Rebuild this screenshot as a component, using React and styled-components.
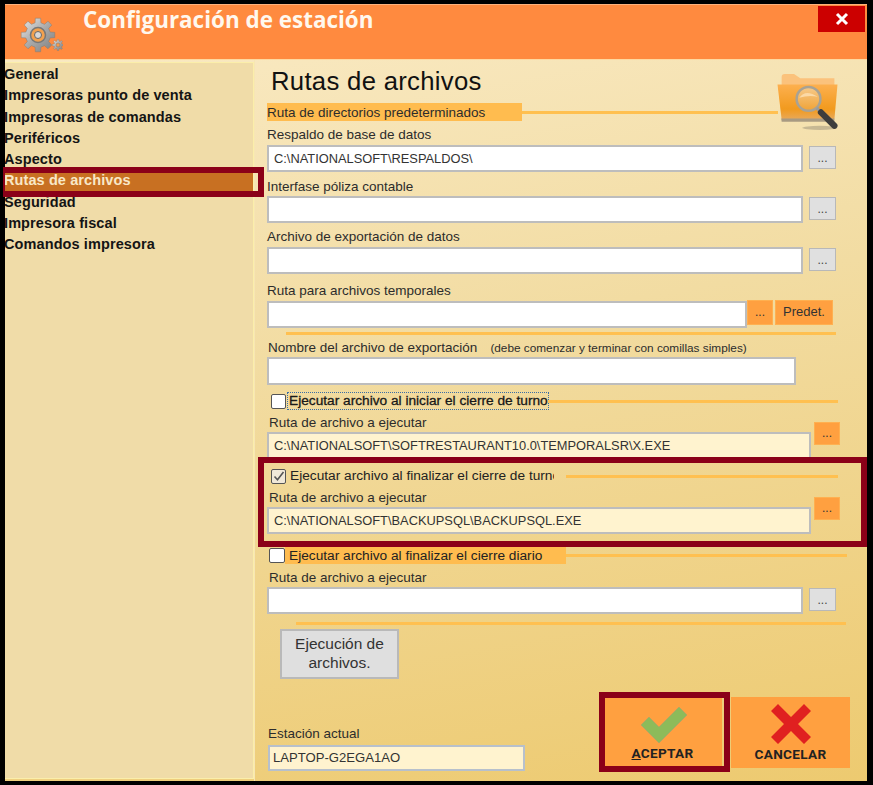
import React from 'react';
import styled, { createGlobalStyle } from 'styled-components';

const Global = createGlobalStyle`
  html, body { margin: 0; padding: 0; background: #000; }
  body { width: 873px; height: 785px; overflow: hidden; font-family: "Liberation Sans", Arial, sans-serif; }
`;

const Frame = styled.div`
  position: relative; box-sizing: border-box; width: 873px; height: 785px;
  padding: 4px 6px 4px 5px; display: flex; flex-direction: column; background: #000;
`;
const TitleBar = styled.header`
  height: 55px; flex: none; display: flex; background: #ff8a3f; align-items: flex-start;
  border-top: 1px solid #ffb27c; box-sizing: border-box;
`;
const Logo = styled.svg`width: 48px; height: 44px; margin: 10px 0 0 10px; flex: none;`;
const TitleText = styled.h1`
  margin: 0 0 0 20px; font: 700 22.45px/30px "Open Sans", sans-serif; color: #fff8ee;
`;
const CloseBtn = styled.div`
  margin: 1px 2px 0 auto; width: 47px; height: 26px; background: #cc0000; color: #fff;
  display: flex; align-items: center; justify-content: center;
`;
const Body = styled.div`
  flex: 1; display: flex; min-height: 0;
  background: linear-gradient(170deg, #f9e9c2 0%, #f2dca2 40%, #edca70 100%);
  border-top: 1px solid #ffd9a0; box-sizing: border-box;
`;
const Sidebar = styled.nav`
  width: 249px; flex: none; box-sizing: border-box; margin: 2px 0 2px; padding-top: 1px;
  background: #f0dca8; border-top: 1px solid #fbeeaa; border-right: 1px solid #fbeeaa; border-bottom: 1px solid #fbeeaa;
  overflow: hidden;
`;
const NavItem = styled.div`
  height: 21.25px; line-height: 21.25px; font-size: 14.5px; font-weight: 700; letter-spacing: 0.1px;
  margin-left: -1px; padding-left: 0; white-space: nowrap;
  color: ${p => p.$active ? '#f8e8c8' : '#141414'};
  background: ${p => p.$active ? '#c87022' : 'transparent'};
`;
const Main = styled.main`
  flex: 1; position: relative; padding: 7px 0 0 12px; display: flex; flex-direction: column;
  color: #2c2c2c; border-left: 1px solid #f7e6b4; box-sizing: border-box;
`;
const PageTitle = styled.h2`
  margin: 0 0 0 4px; font-weight: 400; font-size: 25.7px; letter-spacing: 0.3px; line-height: 28px; color: #111; height: 28px;
`;
const FolderIcon = styled.svg`
  position: absolute; left: 519px; top: 12px; width: 67px; height: 60px;
`;
const HeadRow = styled.div`
  display: flex; align-items: center; height: 18px; margin-top: ${p => p.$mt || 0}px; width: ${p => p.$w}px;
`;
const Band = styled.div`
  width: ${p => p.$w}px; height: 100%; background: #ffbc4f; flex: none; font-size: 13.5px; line-height: 20px; white-space: nowrap; color: #2c2c2c;
`;
const Line = styled.div`height: 3px; flex: 1; background: #ffc050;`;
const Rule = styled.div`
  height: 3px; background: #ffc050; flex: none; margin-top: ${p => p.$mt}px; margin-left: ${p => p.$ml}px; width: ${p => p.$w}px;
`;
const FieldLabel = styled.div`
  height: 14px; line-height: 16px; font-size: 13.5px; margin-top: ${p => p.$mt}px; margin-left: ${p => p.$ml || 0}px; white-space: nowrap; flex: none;
  color: #2c2c2c;
`;
const Note = styled.span`font-size: 11.8px; margin-left: 13px;`;
const Row = styled.div`display: flex; align-items: flex-start; margin-top: ${p => p.$mt}px; height: ${p => p.$h || 27}px; flex: none;`;
const TextBox = styled.div`
  box-sizing: border-box; width: ${p => p.$w}px; height: ${p => p.$h || 27}px; flex: none; padding-left: 5px;
  background: ${p => p.$fill ? '#fff3cf' : '#fff'}; border: 2px solid #bdbdbd; font-size: 12.85px; line-height: 23px; color: #333; white-space: nowrap;
`;
const GrayDots = styled.div`
  box-sizing: border-box; width: 27px; height: 23px; margin: 1px 0 0 6px; flex: none; background: #e0e0e0; border: 1px solid #b8b8b8;
  font-size: 12px; line-height: 22px; text-align: center; color: #444;
`;
const OrangeBtn = styled.div`
  box-sizing: border-box; flex: none; width: ${p => p.$w}px; height: ${p => p.$h || 25}px; margin: ${p => p.$mt}px 0 0 ${p => p.$ml}px;
  background: #ffa040; border: 1px solid #ffb050; font-size: ${p => p.$fs || 12}px; line-height: ${p => (p.$h || 25) - 3}px; text-align: center; color: #333; white-space: nowrap;
`;
const CheckRow = styled.div`
  display: flex; align-items: center; height: ${p => p.$h || 18}px; flex: none; margin-top: ${p => p.$mt}px; margin-left: ${p => p.$ml}px; width: ${p => p.$w}px;
`;
const Box = styled.div`
  box-sizing: border-box; width: ${p => p.$s || 15}px; height: 15px; flex: none; border: 1px solid #555; border-radius: 2px; background: ${p => p.$on ? '#f0e8d8' : '#fff'};
  display: flex; align-items: center; justify-content: center;
`;
const CheckText = styled.div`
  width: ${p => p.$w}px; margin-left: ${p => p.$ml || 0}px; box-sizing: border-box; overflow: hidden; white-space: nowrap; flex: none; font-size: 13.7px; line-height: 16px;
  padding-left: 1px; color: #222;
  ${p => p.$focus && 'outline: 1px dotted #3b6ea5; outline-offset: 0; color: #111; -webkit-text-stroke: 0.3px #222;'}
  ${p => p.$band && 'background: #ffbc4f; height: 17px; line-height: 17px; padding-left: 4px;'}
`;
const GrayButton = styled.div`
  box-sizing: border-box; width: 119px; height: 50px; margin: 4px 0 0 13px; flex: none; background: #dfdfdf; border: 2px solid #b9b9b9;
  font-size: 15.5px; line-height: 19px; text-align: center; color: #333; padding-top: 3px;
`;
const Footer = styled.div`display: flex; margin-top: 18px; flex: none; height: 74px;`;
const Station = styled.div`display: flex; flex-direction: column; justify-content: flex-end; width: 337px; margin-left: 1px; flex: none;`;
const StationBox = styled.div`
  box-sizing: border-box; width: 257px; height: 26px; margin-top: 5px; padding-left: 3px; background: #fff3cf; border: 2px solid #b7c0cc;
  font-size: 13.1px; line-height: 22px; color: #333;
`;
const ActionBtn = styled.div`
  box-sizing: border-box; width: ${p => p.$w}px; height: 71px; margin-left: ${p => p.$ml}px; flex: none; background: #ffa040;
  display: flex; flex-direction: column; align-items: center; font: 700 13.6px/15px Roboto, sans-serif; color: #222; letter-spacing: 0.3px; padding-top: 9px;
  svg { margin-bottom: 3px; flex: none; }
  u { text-decoration-thickness: 1px; }
`;
const ActionLabel = styled.span`margin-right: 2px;`;
const CheckMark = styled.svg`margin-top: 1px;`;
const Cross = styled.svg`margin-top: -2px;`;
const Highlight = styled.div`
  position: absolute; box-sizing: border-box; border: 6px solid #8b0018; pointer-events: none;
  left: ${p => p.$x}px; top: ${p => p.$y}px; width: ${p => p.$w}px; height: ${p => p.$h}px;
  ${p => p.$thinLeft && 'border-left-width: 2px;'}
`;

function gearPath(cx, cy, ro, ri, teeth) {
  const pts = [];
  const st = (Math.PI * 2) / teeth;
  for (let i = 0; i < teeth; i++) {
    const a = i * st - Math.PI / 2;
    const w = st * 0.2, g = st * 0.3;
    [[a - g, ri], [a - w, ro], [a + w, ro], [a + g, ri]].forEach(([t, r]) => {
      pts.push(`${(cx + r * Math.cos(t)).toFixed(2)} ${(cy + r * Math.sin(t)).toFixed(2)}`);
    });
  }
  return 'M' + pts.join('L') + 'Z';
}

const GearLogo = () => (
  <Logo viewBox="0 0 48 44">
    <defs>
      <linearGradient id="gearFill" x1="0" y1="0" x2="1" y2="1">
        <stop offset="0" stopColor="#e8e8e8" />
        <stop offset="0.5" stopColor="#a9a9a9" />
        <stop offset="1" stopColor="#7e7e7e" />
      </linearGradient>
    </defs>
    <path d={gearPath(23, 20, 17, 12.5, 8)} fill="url(#gearFill)" stroke="#8a7a6a" strokeWidth="0.5" />
    <circle cx="23" cy="20" r="7.5" fill="#f2a14e" stroke="#777" strokeWidth="1.5" />
    <circle cx="23" cy="20" r="3.5" fill="#d8d8d8" stroke="#666" strokeWidth="1" />
    <path d={gearPath(43, 30, 5.6, 4, 8)} fill="url(#gearFill)" stroke="#8a7a6a" strokeWidth="0.4" />
    <circle cx="43" cy="30" r="2" fill="#f59a4c" stroke="#777" strokeWidth="0.5" />
  </Logo>
);

const Folder = () => (
  <FolderIcon viewBox="0 0 64 58">
    <defs>
      <linearGradient id="folderFill" x1="0" y1="0" x2="0" y2="1">
        <stop offset="0" stopColor="#fdb04f" />
        <stop offset="0.7" stopColor="#f19a1e" />
        <stop offset="1" stopColor="#e8a95a" />
      </linearGradient>
      <linearGradient id="lensFill" x1="0" y1="0" x2="0" y2="1">
        <stop offset="0" stopColor="#f6c98a" />
        <stop offset="1" stopColor="#f0a336" />
      </linearGradient>
    </defs>
    <ellipse cx="44" cy="54" rx="17" ry="2" fill="#a89c80" opacity="0.6" />
    <path d="M7 5 Q7 2 10 2 H19 L25 6 H58 V14 H7Z" fill="#fbc27c" />
    <path d="M3 12 H61 L58 46 H7Z" fill="url(#folderFill)" />
    <path d="M6.6 45 H58 V48 H7Z" fill="#a89a82" />
    <circle cx="33" cy="26" r="11.5" fill="url(#lensFill)" stroke="#a8a294" strokeWidth="2.4" />
    <path d="M24 25 Q30 16 42 24 Q33 22 24 25Z" fill="#fbd9a6" />
    <path d="M41 35 L45 39" stroke="#9a9a9a" strokeWidth="3" />
    <path d="M45 39 L58 52" stroke="#3d3d3d" strokeWidth="6" strokeLinecap="round" />
  </FolderIcon>
);

const Tick = () => (
  <svg width="12" height="12" viewBox="0 0 12 12"><path d="M1.5 6.5 L4.5 9.8 L10.5 2" fill="none" stroke="#555" strokeWidth="1.6" /></svg>
);

const BTN = '...';

export default function App() {
  const items = ['General', 'Impresoras punto de venta', 'Impresoras de comandas', 'Periféricos', 'Aspecto', 'Rutas de archivos', 'Seguridad', 'Impresora fiscal', 'Comandos impresora'];
  return (
    <Frame>
      <Global />
      <TitleBar>
        <GearLogo />
        <TitleText>Configuración de estación</TitleText>
        <CloseBtn>
          <svg width="14" height="14" viewBox="0 0 14 14"><path d="M2 2 L12 12 M12 2 L2 12" stroke="#fff" strokeWidth="3" /></svg>
        </CloseBtn>
      </TitleBar>
      <Body>
        <Sidebar>
          {items.map(t => <NavItem key={t} $active={t === 'Rutas de archivos'}>{t}</NavItem>)}
        </Sidebar>
        <Main>
          <Folder />
          <PageTitle>Rutas de archivos</PageTitle>
          <HeadRow $mt={8} $w={511}><Band $w={255}>Ruta de directorios predeterminados</Band><Line /></HeadRow>

          <FieldLabel $mt={6}>Respaldo de base de datos</FieldLabel>
          <Row $mt={4}><TextBox $w={536}>C:\NATIONALSOFT\RESPALDOS\</TextBox><GrayDots>{BTN}</GrayDots></Row>

          <FieldLabel $mt={7}>Interfase póliza contable</FieldLabel>
          <Row $mt={3}><TextBox $w={536} /><GrayDots>{BTN}</GrayDots></Row>

          <FieldLabel $mt={6}>Archivo de exportación de datos</FieldLabel>
          <Row $mt={4}><TextBox $w={536} /><GrayDots>{BTN}</GrayDots></Row>

          <FieldLabel $mt={9}>Ruta para archivos temporales</FieldLabel>
          <Row $mt={4}>
            <TextBox $w={480} />
            <OrangeBtn $w={26} $mt={-1} $ml={0}>{BTN}</OrangeBtn>
            <OrangeBtn $w={58} $mt={-1} $ml={2} $fs={13}>Predet.</OrangeBtn>
          </Row>
          <Rule $mt={4} $ml={19} $w={550} />

          <FieldLabel $mt={5} $ml={1}>Nombre del archivo de exportación<Note>(debe comenzar y terminar con comillas simples)</Note></FieldLabel>
          <Row $mt={3} $h={28}><TextBox $w={529} $h={28} /></Row>

          <CheckRow $mt={7} $ml={4} $w={567}>
            <Box />
            <CheckText $ml={2} $w={260} $focus>Ejecutar archivo al iniciar el cierre de turno</CheckText>
            <Line />
          </CheckRow>
          <FieldLabel $mt={5} $ml={2}>Ruta de archivo a ejecutar</FieldLabel>
          <Row $mt={3}>
            <TextBox $w={544} $fill>C:\NATIONALSOFT\SOFTRESTAURANT10.0\TEMPORALSR\X.EXE</TextBox>
            <OrangeBtn $w={26} $h={23} $mt={-10} $ml={3}>{BTN}</OrangeBtn>
          </Row>

          <CheckRow $mt={8} $ml={4} $w={567}>
            <Box $on><Tick /></Box>
            <CheckText $ml={3} $w={265}>Ejecutar archivo al finalizar el cierre de turno</CheckText>
            <Rule $mt={0} $ml={12} $w={272} />
          </CheckRow>
          <FieldLabel $mt={5} $ml={2}>Ruta de archivo a ejecutar</FieldLabel>
          <Row $mt={3}>
            <TextBox $w={544} $fill>C:\NATIONALSOFT\BACKUPSQL\BACKUPSQL.EXE</TextBox>
            <OrangeBtn $w={26} $h={23} $mt={-10} $ml={3}>{BTN}</OrangeBtn>
          </Row>

          <CheckRow $mt={13} $ml={2} $w={578} $h={17}>
            <Box $s={16} />
            <CheckText $w={281} $band>Ejecutar archivo al finalizar el cierre diario</CheckText>
            <Line />
          </CheckRow>
          <FieldLabel $mt={6} $ml={2}>Ruta de archivo a ejecutar</FieldLabel>
          <Row $mt={3}><TextBox $w={536} /><GrayDots>{BTN}</GrayDots></Row>
          <Rule $mt={8} $ml={29} $w={550} />

          <GrayButton>Ejecución de<br />archivos.</GrayButton>

          <Footer>
            <Station>
              <FieldLabel $mt={0}>Estación actual</FieldLabel>
              <StationBox>LAPTOP-G2EGA1AO</StationBox>
            </Station>
            <ActionBtn $w={117} $ml={0}>
              <CheckMark width="46" height="36" viewBox="0 0 46 36"><path d="M0 18 L8 10 L18 20 L38 0 L46 8 L18 36 Z" fill="#8cbb5a" stroke="#a8a070" strokeWidth="0.6" /></CheckMark>
              <ActionLabel><u>A</u>CEPTAR</ActionLabel>
            </ActionBtn>
            <ActionBtn $w={119} $ml={9}>
              <Cross width="40" height="40" viewBox="0 0 40 40"><path d="M7 0 L20 13 L33 0 L40 7 L27 20 L40 33 L33 40 L20 27 L7 40 L0 33 L13 20 L0 7Z" fill="#e02020" /></Cross>
              <span>CANCELAR</span>
            </ActionBtn>
          </Footer>
        </Main>
      </Body>
      <Highlight $thinLeft $x={3} $y={167} $w={261} $h={30} />
      <Highlight $x={258} $y={457} $w={609} $h={90} />
      <Highlight $x={599} $y={692} $w={131} $h={80} />
    </Frame>
  );
}
